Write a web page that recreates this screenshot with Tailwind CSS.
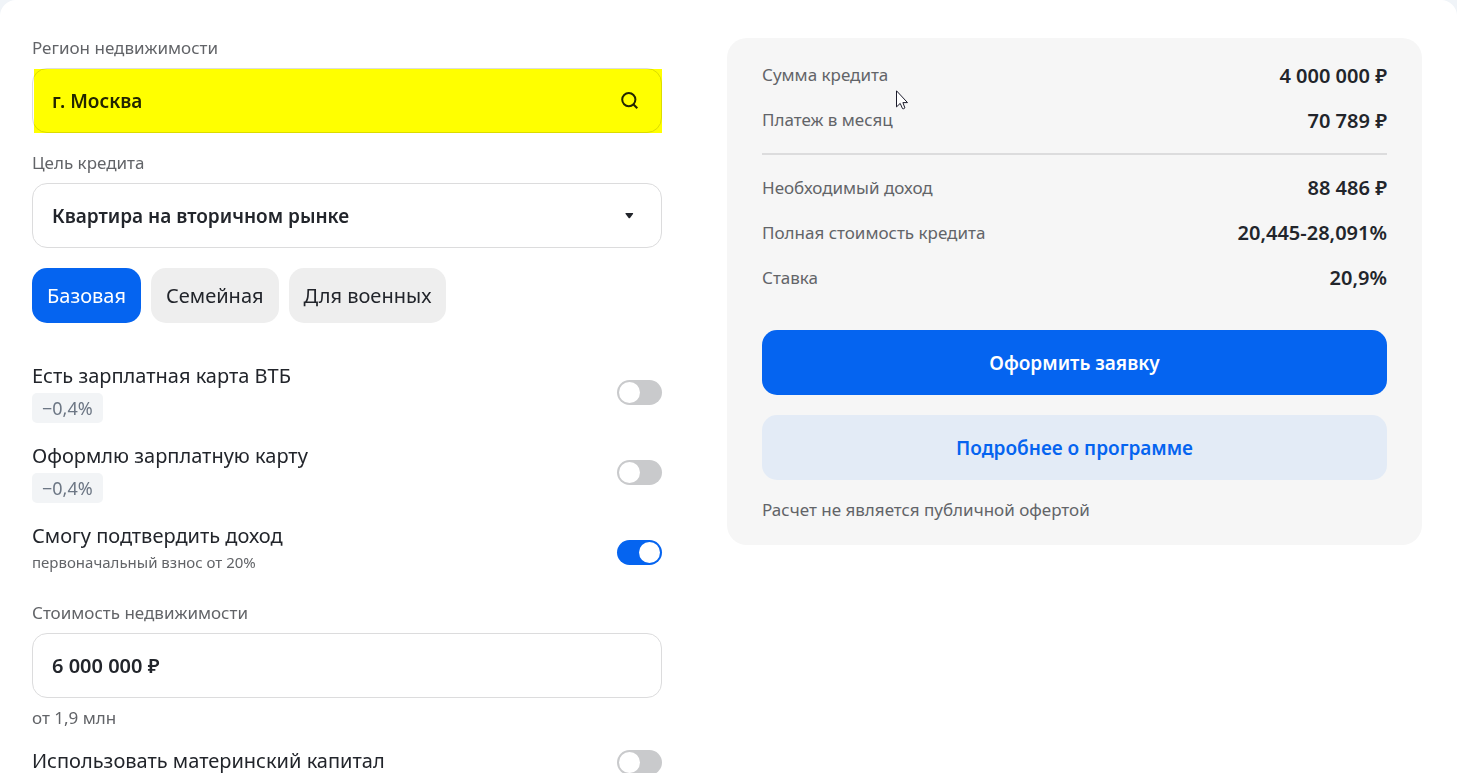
<!DOCTYPE html>
<html lang="ru">
<head>
    <meta charset="UTF-8">
    <meta name="viewport" content="width=device-width, initial-scale=1.0">
    <title>Ипотечный калькулятор</title>
    <script src="https://cdn.jsdelivr.net/npm/@tailwindcss/browser@4"></script>
</head>
<body class="h-screen overflow-hidden bg-[#f0f4f8] font-['Noto_Sans',sans-serif] text-[#22252b]">

    <main class="min-h-full rounded-t-[16px] bg-white pt-[38px] pr-[35px] pb-8 pl-8">
        <div class="grid grid-cols-[630fr_695fr] items-start gap-[65px]">

            <!-- Параметры кредита -->
            <form>
                <label for="region" class="block text-[17px] leading-5 text-[#626468]">Регион недвижимости</label>
                <div class="relative mt-2.5">
                    <input id="region" type="text" value="г. Москва" class="block h-[65px] w-full rounded-[15px] border border-[#dcdcdd] bg-white pr-14 pl-[19px] text-[19px] font-semibold outline-none">
                    <svg class="pointer-events-none absolute top-[22px] right-[22px] size-5" viewBox="0 0 20 20" fill="none" stroke="#22252b" stroke-width="2">
                        <circle cx="8.8" cy="9.6" r="6.6"/>
                        <path d="M13.3 14.2 L17.3 18.2"/>
                    </svg>
                    <!-- жёлтая подсветка поля -->
                    <div class="pointer-events-none absolute top-px right-0 bottom-0 left-0.5 bg-[#ffff00] mix-blend-multiply"></div>
                </div>

                <label for="purpose" class="mt-5 block text-[17px] leading-5 text-[#626468]">Цель кредита</label>
                <div class="relative mt-2.5">
                    <select id="purpose" class="block h-[65px] w-full appearance-none rounded-[15px] border border-[#dcdcdd] bg-white pt-0.5 pr-14 pl-[19px] text-[19px] font-semibold outline-none">
                        <option>Квартира на вторичном рынке</option>
                        <option>Квартира в новостройке</option>
                    </select>
                    <svg class="pointer-events-none absolute top-[22px] right-[22px] size-5" viewBox="0 0 20 20" fill="#22252b">
                        <path d="M6 8 H12.6 Q13.6 8 13 8.9 L10 12.9 Q9.3 13.8 8.6 12.9 L5.6 8.9 Q5 8 6 8Z"/>
                    </svg>
                </div>

                <div class="mt-5 flex gap-2.5 text-[20px]">
                    <button type="button" class="h-[55px] rounded-[15px] bg-[#0564f0] px-[15px] text-white">Базовая</button>
                    <button type="button" class="h-[55px] rounded-[15px] bg-[#eeeeee] px-[15px]">Семейная</button>
                    <button type="button" class="h-[55px] rounded-[15px] bg-[#eeeeee] px-[15px]">Для военных</button>
                </div>

                <div class="mt-10 flex flex-col gap-5">
                    <label class="flex h-[60px] justify-between">
                        <span>
                            <span class="block text-[20px] leading-[26px]">Есть зарплатная карта ВТБ</span>
                            <span class="mt-1 inline-block h-[30px] rounded-[5px] bg-[#f2f4f6] px-2.5 align-top text-[18px] leading-[30px] text-[#6c7684]">−0,4%</span>
                        </span>
                        <input type="checkbox" class="mt-[17px] h-[25px] w-[45px] appearance-none rounded-full bg-[#c9cacc] p-0.5 before:block before:size-[21px] before:rounded-full before:bg-white checked:bg-[#0564f0] checked:before:ml-5">
                    </label>
                    <label class="flex h-[60px] justify-between">
                        <span>
                            <span class="block text-[20px] leading-[26px]">Оформлю зарплатную карту</span>
                            <span class="mt-1 inline-block h-[30px] rounded-[5px] bg-[#f2f4f6] px-2.5 align-top text-[18px] leading-[30px] text-[#6c7684]">−0,4%</span>
                        </span>
                        <input type="checkbox" class="mt-[17px] h-[25px] w-[45px] appearance-none rounded-full bg-[#c9cacc] p-0.5 before:block before:size-[21px] before:rounded-full before:bg-white checked:bg-[#0564f0] checked:before:ml-5">
                    </label>
                    <label class="flex h-[60px] justify-between">
                        <span>
                            <span class="block text-[20px] leading-[26px]">Смогу подтвердить доход</span>
                            <span class="mt-1 block text-[15px] leading-[18px] text-[#626468]">первоначальный взнос от 20%</span>
                        </span>
                        <input type="checkbox" checked class="mt-[17px] h-[25px] w-[45px] appearance-none rounded-full bg-[#c9cacc] p-0.5 before:block before:size-[21px] before:rounded-full before:bg-white checked:bg-[#0564f0] checked:before:ml-5">
                    </label>
                </div>

                <label for="price" class="mt-5 block text-[17px] leading-5 text-[#626468]">Стоимость недвижимости</label>
                <input id="price" type="text" value="6 000 000 ₽" class="mt-2.5 block h-[65px] w-full rounded-[15px] border border-[#dcdcdd] bg-white px-[19px] text-[20px] font-semibold outline-none">
                <p class="mt-2.5 text-[17px] leading-5 text-[#626468]">от 1,9 млн</p>

                <label class="mt-5 flex items-start justify-between">
                    <span class="text-[20px] leading-[26px]">Использовать материнский капитал</span>
                    <input type="checkbox" class="mt-0.5 h-[25px] w-[45px] appearance-none rounded-full bg-[#c9cacc] p-0.5 before:block before:size-[21px] before:rounded-full before:bg-white checked:bg-[#0564f0] checked:before:ml-5">
                </label>
            </form>

            <!-- Результат расчета -->
            <section class="relative rounded-[20px] bg-[#f6f6f6] px-[35px] py-[25px]">
                <dl class="flex flex-col gap-5 text-[17px] leading-[25px]">
                    <div class="flex justify-between">
                        <dt class="leading-6 text-[#626468]">Сумма кредита</dt>
                        <dd class="text-[20px] font-semibold">4 000 000 ₽</dd>
                    </div>
                    <div class="flex justify-between">
                        <dt class="leading-6 text-[#626468]">Платеж в месяц</dt>
                        <dd class="text-[20px] font-semibold">70 789 ₽</dd>
                    </div>
                </dl>
                <hr class="my-5 border-t-2 border-[#dcdcdd]">
                <dl class="flex flex-col gap-5 text-[17px] leading-[25px]">
                    <div class="flex justify-between">
                        <dt class="text-[#626468]">Необходимый доход</dt>
                        <dd class="text-[20px] font-semibold">88 486 ₽</dd>
                    </div>
                    <div class="flex justify-between">
                        <dt class="text-[#626468]">Полная стоимость кредита</dt>
                        <dd class="text-[20px] font-semibold">20,445-28,091%</dd>
                    </div>
                    <div class="flex justify-between">
                        <dt class="text-[#626468]">Ставка</dt>
                        <dd class="text-[20px] font-semibold">20,9%</dd>
                    </div>
                </dl>
                <button type="button" class="mt-10 h-[65px] w-full rounded-[15px] bg-[#0564f0] pt-0.5 text-[19px] font-semibold text-white">Оформить заявку</button>
                <button type="button" class="mt-5 h-[65px] w-full rounded-[15px] bg-[#e3ebf6] pt-0.5 text-[19px] font-semibold text-[#0564f0]">Подробнее о программе</button>
                <p class="mt-5 text-[17px] leading-5 text-[#626468]">Расчет не является публичной офертой</p>

                <!-- указатель мыши -->
                <svg class="pointer-events-none absolute top-[52px] left-[169px] h-5 w-3" viewBox="0 0 12 20" fill="#ffffff" stroke="#1b1b2b" stroke-width="1">
                    <path d="M0.5 0.8 V16.9 L4.2 13.4 L6.5 18.6 Q7.6 19.2 8.9 17.9 L6.9 12.6 H11.5 Z"/>
                </svg>
            </section>
        </div>
    </main>

</body>
</html>
